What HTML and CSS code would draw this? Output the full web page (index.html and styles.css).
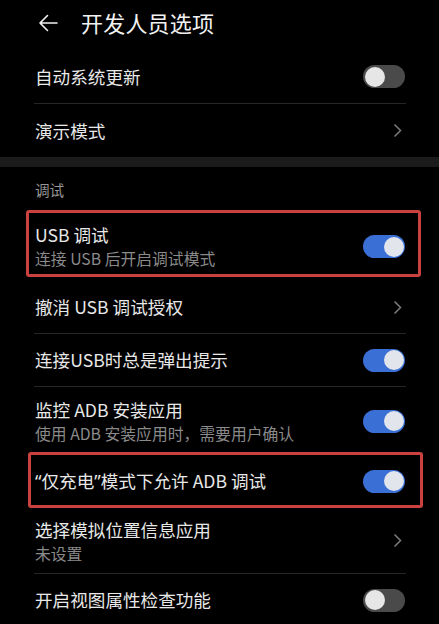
FILE: index.html
```html
<!DOCTYPE html>
<html lang="zh-CN">
<head>
<meta charset="utf-8">
<title>开发人员选项</title>
<link rel="stylesheet" href="styles.css">
</head>
<body>
<div class="screen">
  <header class="appbar">
    <svg class="back" width="20" height="18" viewBox="0 0 20 18" aria-hidden="true">
      <path d="M19 9H2M9.5 1.5L2 9l7.5 7.5" fill="none" stroke="#f2f2f2" stroke-width="1.6" stroke-linecap="round" stroke-linejoin="round"/>
    </svg>
    <h1 class="title">开发人员选项</h1>
  </header>

  <div class="group">
    <div class="row row-first divided">
      <span class="label">自动系统更新</span>
      <span class="toggle"><span class="knob"></span></span>
    </div>
    <div class="row row-demo">
      <span class="label">演示模式</span>
      <svg class="chev" width="9" height="15" viewBox="0 0 9 15" aria-hidden="true"><path d="M1.5 1.5l6 6-6 6" fill="none" stroke="#7b7b7b" stroke-width="1.5"/></svg>
    </div>
  </div>

  <div class="band"></div>

  <div class="group">
    <div class="section">调试</div>
    <div class="row row-two row-usb">
      <div class="texts">
        <span class="label">USB 调试</span>
        <span class="sub">连接 USB 后开启调试模式</span>
      </div>
      <span class="toggle on"><span class="knob"></span></span>
      <span class="mark mark-usb"></span>
    </div>
    <div class="row divided">
      <span class="label">撤消 USB 调试授权</span>
      <svg class="chev" width="9" height="15" viewBox="0 0 9 15" aria-hidden="true"><path d="M1.5 1.5l6 6-6 6" fill="none" stroke="#7b7b7b" stroke-width="1.5"/></svg>
    </div>
    <div class="row divided">
      <span class="label">连接USB时总是弹出提示</span>
      <span class="toggle on"><span class="knob"></span></span>
    </div>
    <div class="row row-two row-adb">
      <div class="texts">
        <span class="label">监控 ADB 安装应用</span>
        <span class="sub">使用 ADB 安装应用时，需要用户确认</span>
      </div>
      <span class="toggle on"><span class="knob"></span></span>
    </div>
    <div class="row row-charge">
      <span class="label"><span class="q">“</span>仅充电<span class="q">”</span>模式下允许 ADB 调试</span>
      <span class="toggle on"><span class="knob"></span></span>
      <span class="mark mark-charge"></span>
    </div>
    <div class="row row-two row-mock divided">
      <div class="texts">
        <span class="label">选择模拟位置信息应用</span>
        <span class="sub">未设置</span>
      </div>
      <svg class="chev" width="9" height="15" viewBox="0 0 9 15" aria-hidden="true"><path d="M1.5 1.5l6 6-6 6" fill="none" stroke="#7b7b7b" stroke-width="1.5"/></svg>
    </div>
    <div class="row">
      <span class="label">开启视图属性检查功能</span>
      <span class="toggle"><span class="knob"></span></span>
    </div>
  </div>
</div>
</body>
</html>
```

FILE: styles.css
```css
* { box-sizing: border-box; }

html, body {
  margin: 0;
  padding: 0;
  background: #000;
}

body {
  font-family: "Noto Sans CJK SC", "Noto Sans", sans-serif;
  font-weight: 400;
  color: #e8e8e8;
  width: 439px;
  height: 624px;
  overflow: hidden;
}

.appbar {
  display: flex;
  align-items: center;
  height: 46px;
  padding: 0 0 2px 38px;
  margin-bottom: 4px;
}

.back {
  display: block;
  margin-top: 2px;
}

.title {
  margin: 0 0 0 23px;
  font-size: 22px;
  font-weight: 400;
  line-height: 28px;
  color: #f2f2f2;
  letter-spacing: 0.2px;
}

.group {
  margin: 0 33px 0 34px;
}

.row {
  position: relative;
  display: flex;
  align-items: center;
  justify-content: space-between;
  height: 52px;
}

.row.divided {
  border-bottom: 1px solid #262626;
  height: 53px;
}

.row.row-first { height: 54px; }
.row.row-demo { height: 53px; }

.row.row-two { height: 69px; }
.row.row-adb { height: 68px; }
.row.row-mock { height: 67px; }
.row.row-charge { height: 52px; }

.label {
  font-size: 17.6px;
  line-height: 24px;
  color: #e8e8e8;
  padding-left: 1px;
}

.q {
  font-family: "Noto Sans", sans-serif;
  font-size: 18px;
}

.texts {
  display: flex;
  flex-direction: column;
}

.row.row-mock .texts {
  padding-top: 2px;
}

.sub {
  font-size: 15.8px;
  line-height: 23px;
  color: #8a8a8a;
  padding-left: 1px;
}

.section {
  height: 45px;
  display: flex;
  align-items: center;
  font-size: 14.6px;
  color: #969696;
  padding-left: 1px;
  padding-bottom: 1px;
}

.band {
  height: 10px;
  background: #1b1b1b;
}

.toggle {
  position: relative;
  flex: none;
  width: 42px;
  height: 23px;
  border-radius: 12px;
  background: #4a4a4a;
  margin-right: 1px;
}

.toggle .knob {
  position: absolute;
  top: 1.5px;
  left: 1.5px;
  width: 20px;
  height: 20px;
  border-radius: 50%;
  background: #e6e6e6;
}

.toggle.on {
  background: #3a6fd6;
}

.toggle.on .knob {
  left: auto;
  right: 1.5px;
  background: #e2e5eb;
}

.chev {
  display: block;
  flex: none;
  margin-right: 4px;
}

.mark {
  position: absolute;
  border: 3px solid #c9423f;
  border-radius: 3px;
  pointer-events: none;
}

.mark-usb {
  top: -2px;
  bottom: 4px;
  left: -8px;
  right: -15px;
}

.mark-charge {
  top: -3px;
  bottom: -1px;
  left: -6px;
  right: -17px;
}
```
